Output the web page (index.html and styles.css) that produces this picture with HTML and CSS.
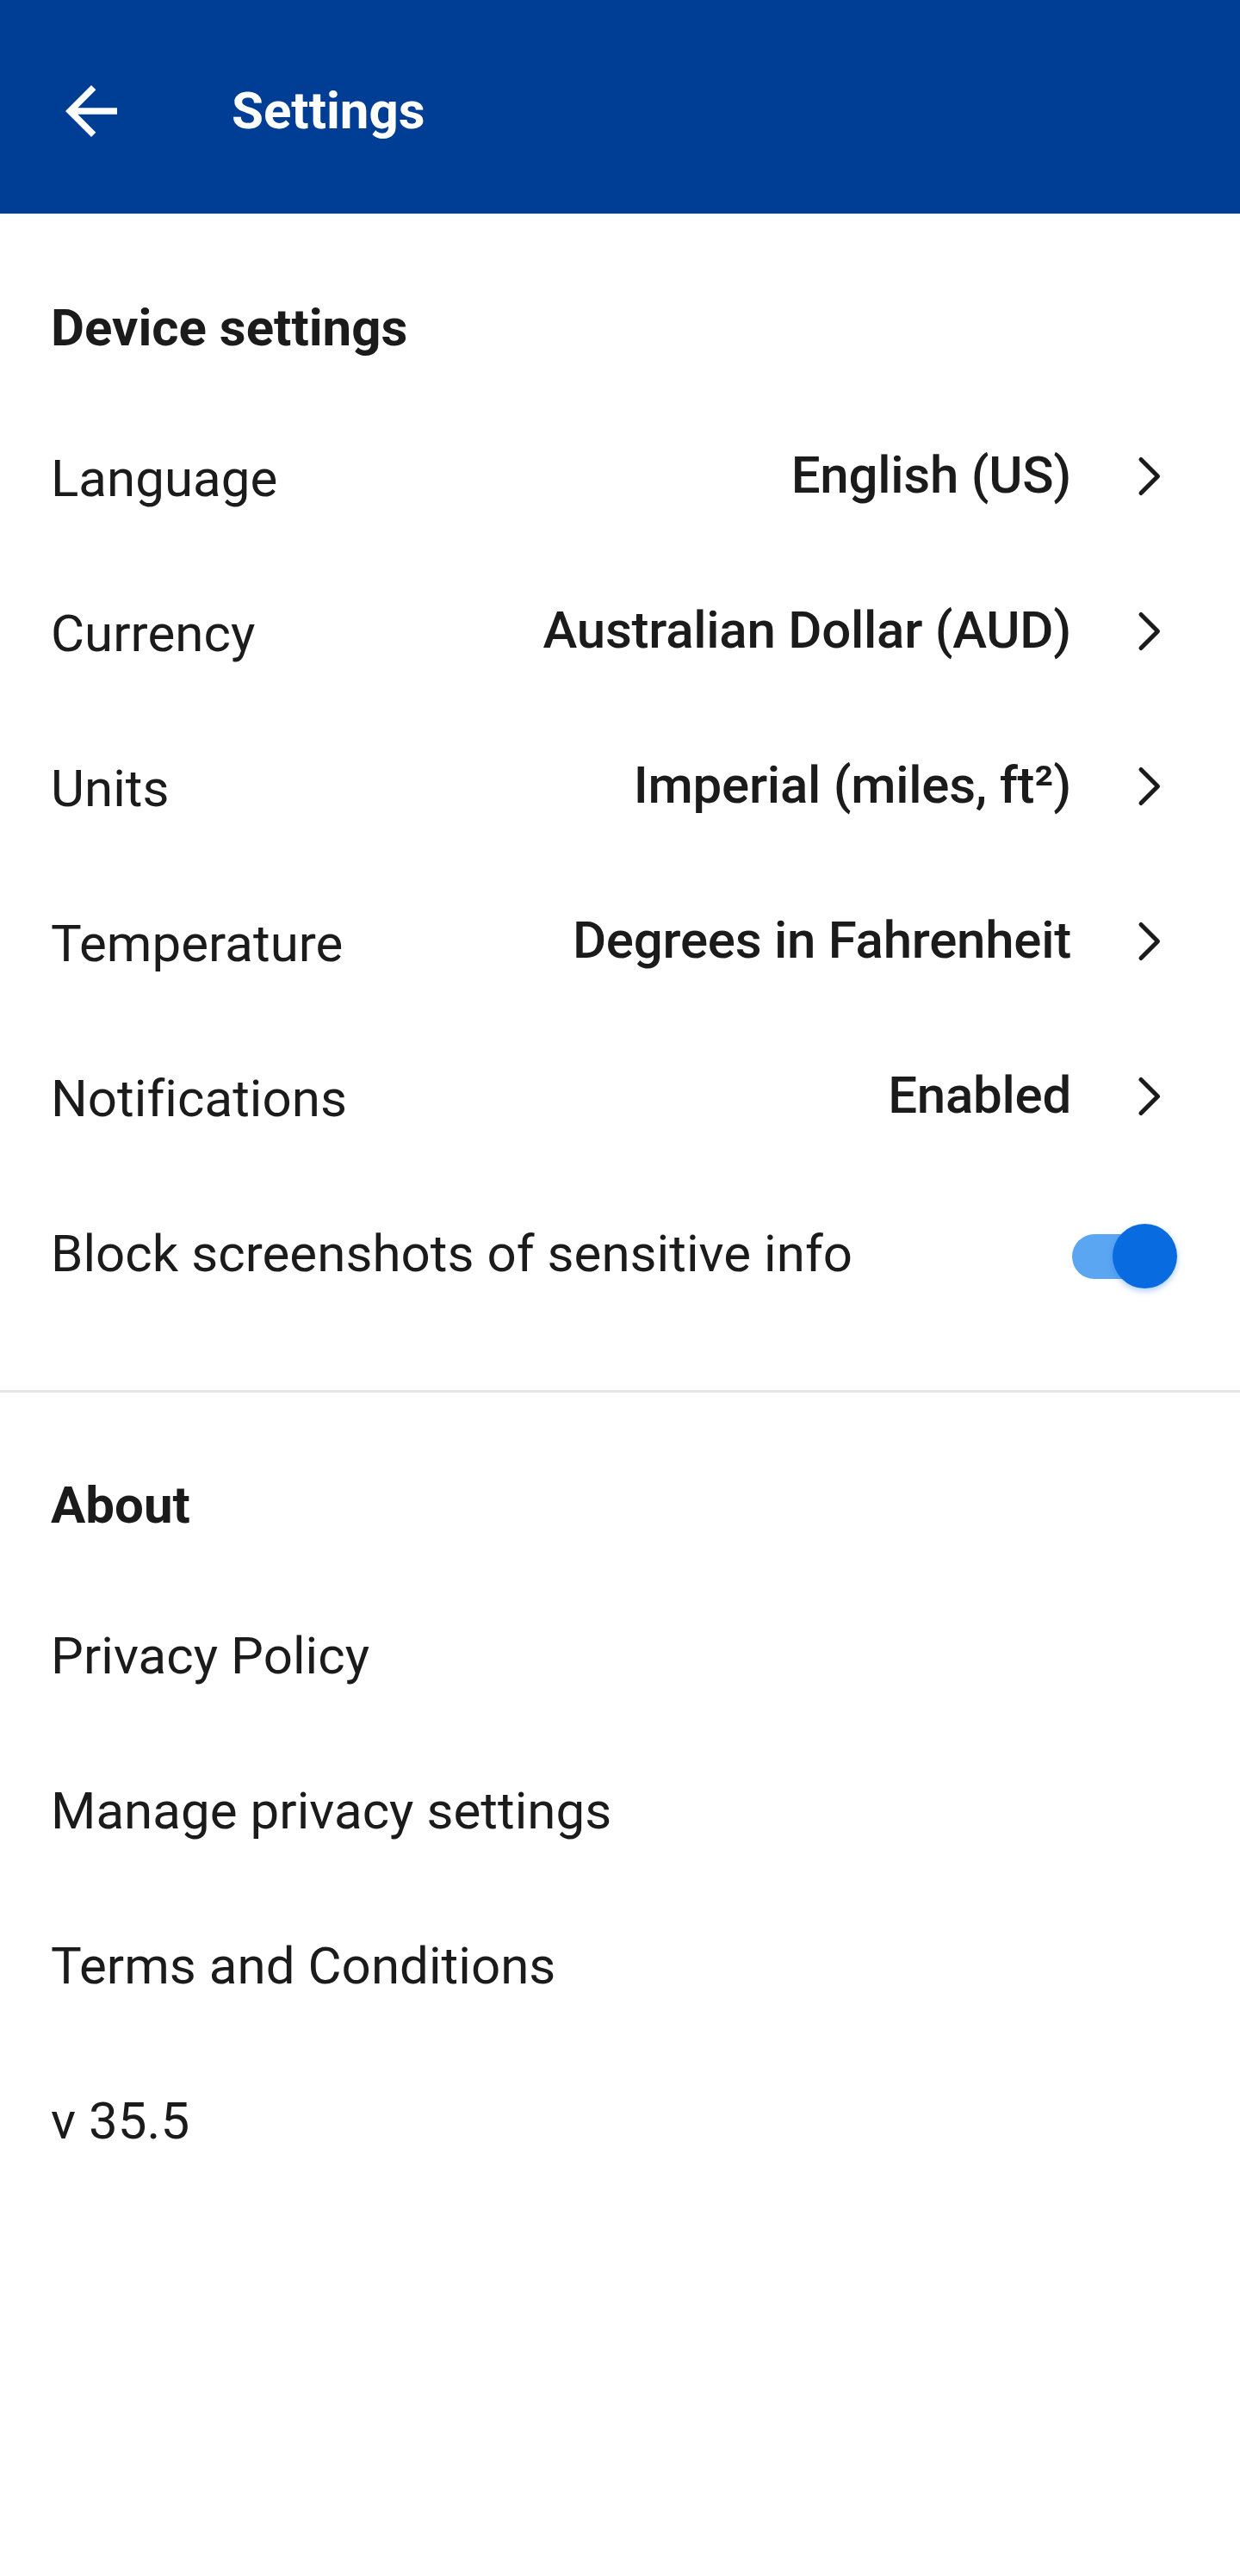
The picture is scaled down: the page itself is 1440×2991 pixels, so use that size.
FILE: index.html
```html
<!DOCTYPE html>
<html lang="en">
<head>
<meta charset="utf-8">
<title>Settings</title>
<link rel="stylesheet" href="styles.css">
</head>
<body>
<header class="appbar">
  <svg class="back" viewBox="0 0 24 24" aria-hidden="true"><path d="M20 11H7.83l5.59-5.59L12 4l-8 8 8 8 1.41-1.41L7.83 13H20v-2z" fill="#fff"/></svg>
  <h1 class="title">Settings</h1>
</header>
<main>
  <section class="section first">
    <h2 class="heading">Device settings</h2>
    <div class="row">
      <span class="label">Language</span>
      <span class="value">English (US)</span>
      <svg class="chev" viewBox="0 0 30 48" aria-hidden="true"><polyline points="5,4.5 24.5,24 5,43.5" /></svg>
    </div>
    <div class="row">
      <span class="label">Currency</span>
      <span class="value">Australian Dollar (AUD)</span>
      <svg class="chev" viewBox="0 0 30 48" aria-hidden="true"><polyline points="5,4.5 24.5,24 5,43.5" /></svg>
    </div>
    <div class="row">
      <span class="label">Units</span>
      <span class="value">Imperial (miles, ft²)</span>
      <svg class="chev" viewBox="0 0 30 48" aria-hidden="true"><polyline points="5,4.5 24.5,24 5,43.5" /></svg>
    </div>
    <div class="row">
      <span class="label">Temperature</span>
      <span class="value">Degrees in Fahrenheit</span>
      <svg class="chev" viewBox="0 0 30 48" aria-hidden="true"><polyline points="5,4.5 24.5,24 5,43.5" /></svg>
    </div>
    <div class="row">
      <span class="label">Notifications</span>
      <span class="value">Enabled</span>
      <svg class="chev" viewBox="0 0 30 48" aria-hidden="true"><polyline points="5,4.5 24.5,24 5,43.5" /></svg>
    </div>
    <div class="row">
      <span class="label">Block screenshots of sensitive info</span>
      <span class="switch"><span class="track"></span><span class="thumb"></span></span>
    </div>
  </section>
  <hr class="divider">
  <section class="section">
    <h2 class="heading">About</h2>
    <div class="row"><span class="label">Privacy Policy</span></div>
    <div class="row"><span class="label">Manage privacy settings</span></div>
    <div class="row"><span class="label">Terms and Conditions</span></div>
    <div class="row"><span class="label">v 35.5</span></div>
  </section>
</main>
</body>
</html>
```
FILE: styles.css
```css
html, body {
  margin: 0;
  padding: 0;
  background: #ffffff;
}
body {
  font-family: Roboto, "Liberation Sans", sans-serif;
  color: #1b1b1b;
  min-height: 2991px;
}
.appbar {
  height: 248px;
  box-sizing: border-box;
  padding-top: 9px;
  background: #003e96;
  display: flex;
  align-items: center;
}
.back {
  width: 90px;
  height: 90px;
  margin-left: 61px;
  flex: none;
}
.title {
  margin: 0 0 0 118px;
  font-size: 60px;
  line-height: 80px;
  font-weight: 700;
  color: #ffffff;
}
.section {
  padding-top: 91px;
}
.section.first {
  padding-top: 93px;
  padding-bottom: 68px;
}
.heading {
  margin: 0 0 45px;
  padding: 0 59px;
  font-size: 60px;
  line-height: 80px;
  font-weight: 700;
}
.row {
  height: 180px;
  padding: 0 59px;
  display: flex;
  align-items: center;
  font-size: 60px;
  line-height: 80px;
}
.label {
  font-weight: 400;
  flex: 1;
  white-space: nowrap;
  letter-spacing: 0.05px;
}
.value {
  font-weight: 500;
  margin-bottom: 8px;
  white-space: nowrap;
  letter-spacing: -0.25px;
}
.chev {
  width: 30px;
  height: 48px;
  margin-left: 76px;
  margin-right: 31px;
  margin-bottom: 6px;
  flex: none;
  fill: none;
  stroke: #1b1b1b;
  stroke-width: 5;
  stroke-linecap: round;
  stroke-linejoin: round;
}
.switch {
  position: relative;
  width: 122px;
  height: 75px;
  margin-right: 14px;
  margin-top: 5px;
  flex: none;
}
.track {
  position: absolute;
  left: 0;
  top: 11.5px;
  width: 112px;
  height: 52px;
  border-radius: 26px;
  background: #5aa6f2;
}
.thumb {
  position: absolute;
  right: 0;
  top: 0;
  width: 75px;
  height: 75px;
  border-radius: 50%;
  background: #086be0;
  box-shadow: 0 3px 7px rgba(20, 110, 230, 0.35);
}
.divider {
  margin: 0;
  border: 0;
  height: 3px;
  background: #e6e6e6;
}
```
